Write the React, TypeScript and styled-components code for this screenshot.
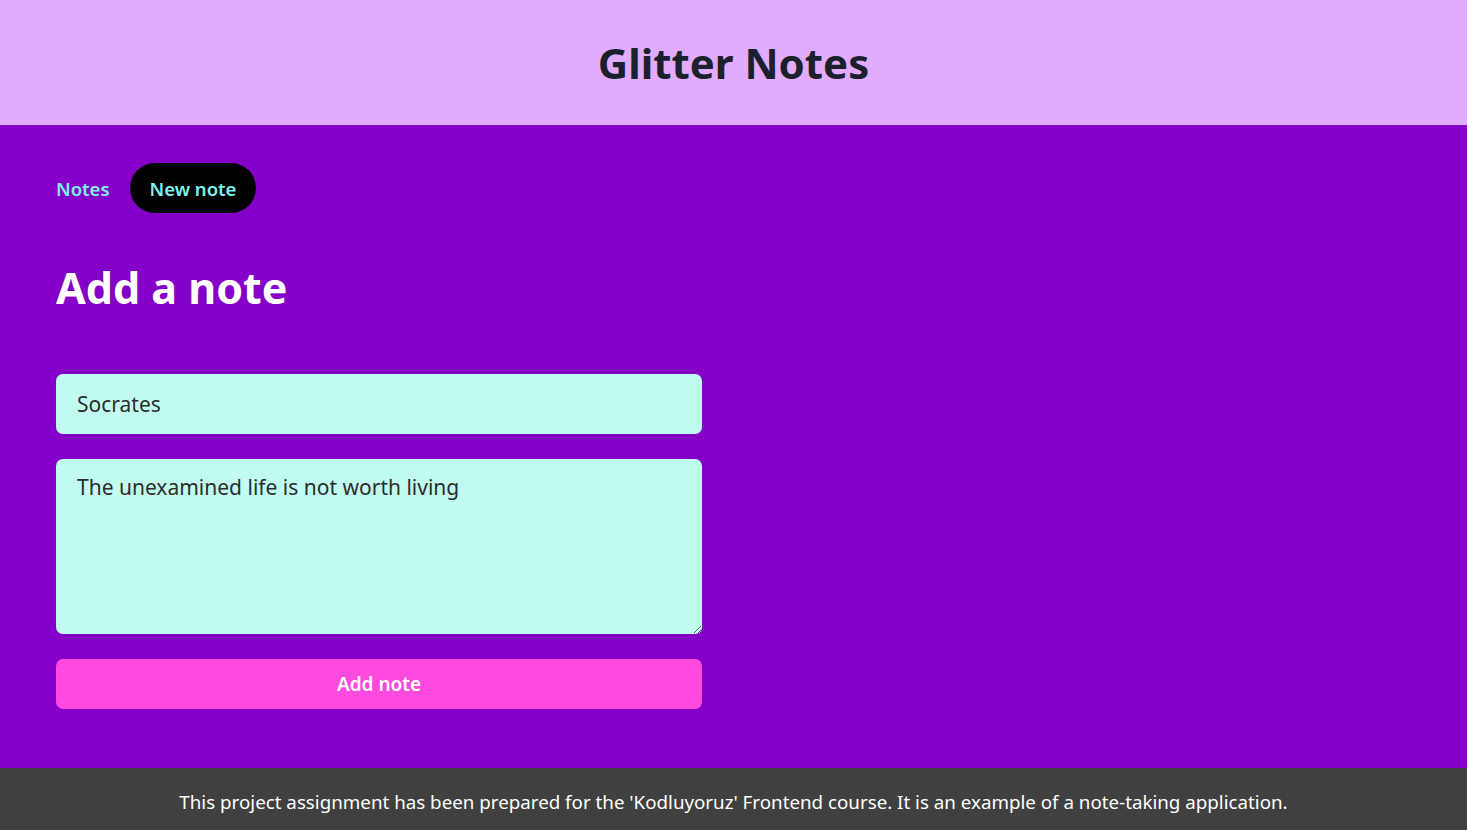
import React, { useState } from "react";
import styled, { createGlobalStyle } from "styled-components";

const Global = createGlobalStyle`
  * { box-sizing: border-box; }
  html, body { margin: 0; padding: 0; }
  body {
    font-family: "Noto Sans", "Open Sans", sans-serif;
    background: #8400c8;
  }
`;

const Page = styled.div`
  min-height: 830px;
  display: flex;
  flex-direction: column;
`;

const Header = styled.header`
  height: 125px;
  background: #e2acfe;
  display: flex;
  align-items: center;
  justify-content: center;
`;

const Title = styled.h1`
  margin: 0;
  font-size: 42px;
  font-weight: 700;
  color: #1a202c;
`;

const Main = styled.main`
  flex: 1;
  background: #8400c8;
  padding: 38px 56px 0;
`;

const Nav = styled.nav`
  display: flex;
  align-items: center;
`;

const NavLink = styled.a<{ $active?: boolean }>`
  display: inline-flex;
  align-items: center;
  height: 50px;
  padding: ${(p) => (p.$active ? "0 20px" : "0 20px 0 0")};
  border-radius: 25px;
  background: ${(p) => (p.$active ? "#000" : "transparent")};
  color: #7ff2ee;
  font-size: 18.5px;
  font-weight: 600;
  text-decoration: none;
  cursor: pointer;
`;

const Heading = styled.h2`
  margin: 46px 0 57px;
  font-size: 43px;
  font-weight: 700;
  color: #fff;
  line-height: 58px;
`;

const Form = styled.form`
  width: 646px;
  display: flex;
  flex-direction: column;
  gap: 25px;
`;

const Input = styled.input`
  height: 60px;
  border: none;
  border-radius: 7px;
  background: #c0fdf0;
  padding: 0 21px;
  font-family: inherit;
  font-size: 21px;
  color: #2d2d2d;
  outline: none;
`;

const TextArea = styled.textarea`
  height: 175px;
  border: none;
  border-radius: 7px;
  background: #c0fdf0;
  padding: 14px 21px;
  font-family: inherit;
  font-size: 21px;
  color: #2d2d2d;
  outline: none;
  resize: vertical;
`;

const Button = styled.button`
  height: 50px;
  border: none;
  border-radius: 7px;
  background: #ff4adf;
  color: #fff;
  font-family: inherit;
  font-size: 19px;
  font-weight: 600;
  cursor: pointer;
`;

const Footer = styled.footer`
  height: 62px;
  padding-top: 4px;
  background: #404040;
  color: #fff;
  display: flex;
  align-items: center;
  justify-content: center;
  font-size: 18.75px;
`;

export default function App() {
  const [title, setTitle] = useState("Socrates");
  const [body, setBody] = useState("The unexamined life is not worth living");
  return (
    <Page>
      <Global />
      <Header>
        <Title>Glitter Notes</Title>
      </Header>
      <Main>
        <Nav>
          <NavLink>Notes</NavLink>
          <NavLink $active>New note</NavLink>
        </Nav>
        <Heading>Add a note</Heading>
        <Form onSubmit={(e) => e.preventDefault()}>
          <Input value={title} onChange={(e) => setTitle(e.target.value)} />
          <TextArea value={body} onChange={(e) => setBody(e.target.value)} />
          <Button type="submit">Add note</Button>
        </Form>
      </Main>
      <Footer>
        This project assignment has been prepared for the 'Kodluyoruz' Frontend course. It is an example of a note-taking application.
      </Footer>
    </Page>
  );
}
